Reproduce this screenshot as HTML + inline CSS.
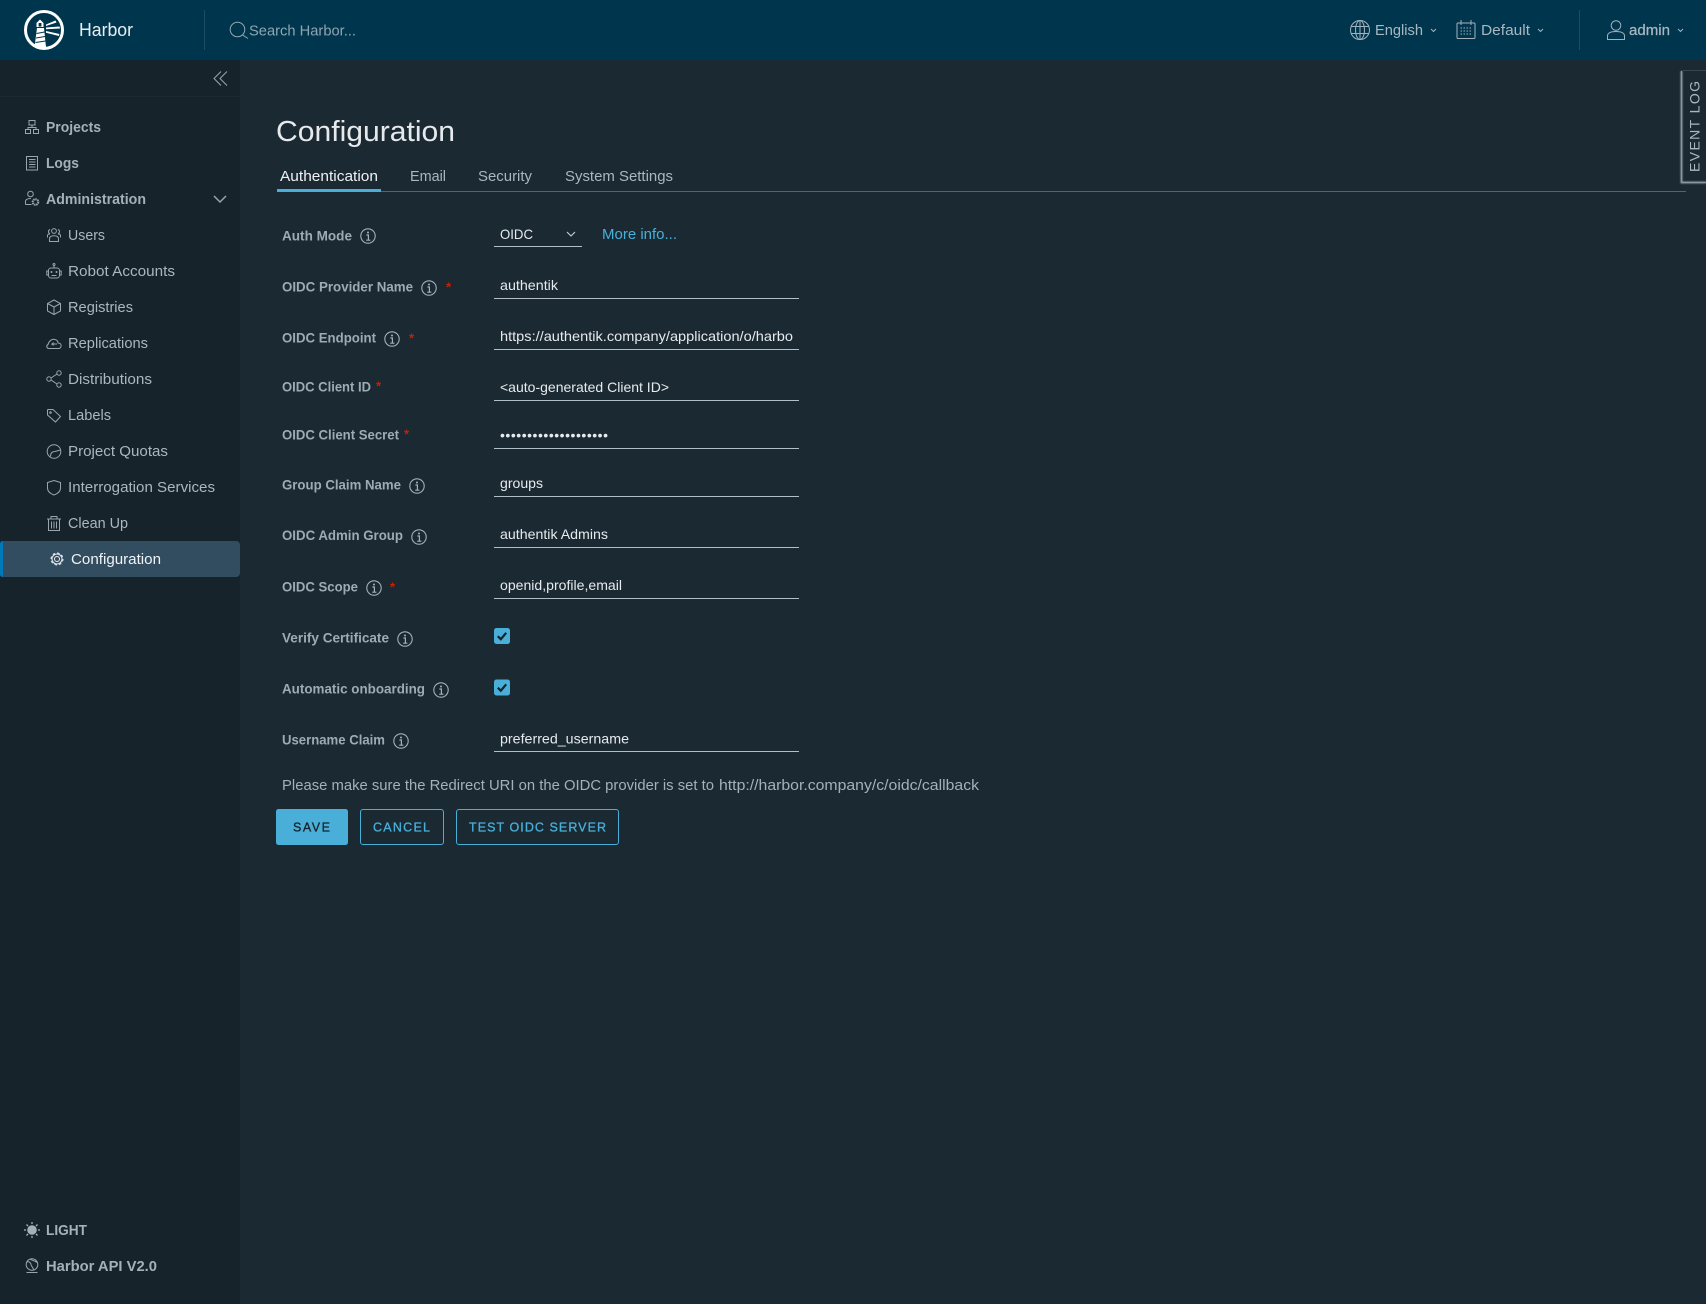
<!DOCTYPE html>
<html lang="en"><head><meta charset="utf-8"><title>Harbor</title>
<style>
html,body{margin:0;padding:0;width:1706px;height:1304px;overflow:hidden;background:#1b2932}
#hd{position:absolute;left:0;top:0;width:1706px;height:60px;background:#00364d}
#sb{position:absolute;left:0;top:60px;width:240px;height:1244px;background:#17232b}
svg{position:absolute;left:0;top:0}
text{font-family:"Liberation Sans",sans-serif;dominant-baseline:central}
.n{font-size:15px;font-weight:700;fill:#a3b1ba}
.s{font-size:15px;fill:#a9b7c0}
.l{font-size:13.5px;font-weight:700;fill:#9dabb4}
.v{font-size:14px;fill:#e6eaed}
.t{font-size:15px;fill:#a9b7c0}
.h{font-size:15px;fill:#a9b7c0}
.b{font-size:12.5px;font-weight:700;fill:#49afd9}
.ic{fill:none;stroke:#98a6af;stroke-width:1}
.ul{stroke:#b3bfc7;stroke-width:1.1}
.st{font-size:13px;fill:#c92100;font-weight:700}
</style></head><body>
<div id="hd"></div><div id="sb"></div>
<svg width="1706" height="1304" viewBox="0 0 1706 1304" xmlns="http://www.w3.org/2000/svg">
<defs>
<symbol id="i" viewBox="0 0 16 16"><circle cx="8" cy="8" r="7.2" fill="none" stroke="#a3b1ba" stroke-width="1.1"/><circle cx="8" cy="4.5" r="1" fill="#a3b1ba"/><path d="M6.4 7H8.4V12M6.2 12.2H10.4" fill="none" stroke="#a3b1ba" stroke-width="1.2"/></symbol>
<symbol id="c" viewBox="0 0 16 16"><rect width="16" height="16" rx="2.5" fill="#49afd9"/><path d="M3.8 8.2L6.8 11.2L12.2 4.8" fill="none" stroke="#17232b" stroke-width="2.2"/></symbol>
<filter id="sh" x="-30%" y="-10%" width="160%" height="120%"><feGaussianBlur stdDeviation="0.9"/></filter>
</defs>

<!-- header -->
<circle cx="44" cy="30" r="18.500" fill="none" stroke="#fff" stroke-width="3"/>
<path d="M37 28H44L46 47H34.500Z" fill="#fff"/>
<path d="M36.500 27V23L40 19.500L43.500 23V27Z" fill="#fff"/>
<rect x="38.600" y="23" width="2.800" height="3.600" fill="#00364d"/>
<path d="M36.500 33.500L44.500 32M36 38L45 36.500M35.500 42.500L45.500 41" stroke="#00364d" stroke-width="1"/>
<path d="M46 24.500L55.500 20.500L56.500 22.500L46 26ZM46 27.500L59.500 26.500L60 28.500L46 29.300ZM46 31L59.500 34L58.800 36L46 32.800Z" fill="#fff"/>
<text x="79" y="30" font-size="18" fill="#e9edf0" textLength="54" lengthAdjust="spacingAndGlyphs">Harbor</text>
<line x1="204.500" y1="10" x2="204.500" y2="50" stroke="#1d4c63" stroke-width="1"/>
<circle cx="237.500" cy="29.500" r="7.300" class="ic"/>
<line x1="242.500" y1="35" x2="248" y2="38.500" class="ic"/>
<text x="249" y="31" class="h" style="fill:#8fa4b0" textLength="107" lengthAdjust="spacingAndGlyphs">Search Harbor...</text>

<g class="ic" style="stroke:#a3b1ba">
<circle cx="1360" cy="30" r="9.500"/><ellipse cx="1360" cy="30" rx="4.500" ry="9.500"/><path d="M1351 26.500H1369M1351 33.500H1369M1360 20.500V39.500"/>
<rect x="1457" y="23" width="18" height="15.500" rx="1"/><path d="M1461 20V25M1471 20V25M1464 23H1468"/>
<path d="M1460.500 28H1472M1460.500 31H1472M1460.500 34H1472" stroke-dasharray="1.500 1.500"/>
<circle cx="1616" cy="25.500" r="4.800"/><path d="M1607.500 39.500V36C1607.500 33 1611 31.500 1616 31.500C1621 31.500 1624.500 33 1624.500 36V39.500Z"/>
<path d="M1431 29L1433.500 31.500L1436 29M1538 29L1540.500 31.500L1543 29M1678 29L1680.500 31.500L1683 29"/>
</g>
<text x="1375" y="30.500" class="h" textLength="48" lengthAdjust="spacingAndGlyphs">English</text>
<text x="1481" y="30.500" class="h" textLength="49" lengthAdjust="spacingAndGlyphs">Default</text>
<line x1="1579.500" y1="10" x2="1579.500" y2="50" stroke="#1d4c63"/>
<text x="1629" y="30.500" class="h" textLength="41" lengthAdjust="spacingAndGlyphs" style="stroke:#a9b7c0;stroke-width:.25">admin</text>

<!-- sidebar -->
<line x1="0" y1="96.500" x2="240" y2="96.500" stroke="#1c2a33"/>
<path d="M221 71.500L214 78.500L221 85.500M227 71.500L220 78.500L227 85.500" class="ic"/>
<rect x="0" y="541" width="240" height="36" rx="4" fill="#324d60"/>
<path d="M3 541Q0 541 0 544V574Q0 577 3 577Z" fill="#0079b8"/>
<text x="46" y="127.500" class="n" textLength="55" lengthAdjust="spacingAndGlyphs">Projects</text>
<text x="46" y="163.500" class="n" textLength="33" lengthAdjust="spacingAndGlyphs">Logs</text>
<text x="46" y="199.500" class="n" textLength="100" lengthAdjust="spacingAndGlyphs">Administration</text>
<text x="68" y="235.500" class="s" textLength="37" lengthAdjust="spacingAndGlyphs">Users</text>
<text x="68" y="271.500" class="s" textLength="107" lengthAdjust="spacingAndGlyphs">Robot Accounts</text>
<text x="68" y="307.500" class="s" textLength="65" lengthAdjust="spacingAndGlyphs">Registries</text>
<text x="68" y="343.500" class="s" textLength="80" lengthAdjust="spacingAndGlyphs">Replications</text>
<text x="68" y="379.500" class="s" textLength="84" lengthAdjust="spacingAndGlyphs">Distributions</text>
<text x="68" y="415.500" class="s" textLength="43" lengthAdjust="spacingAndGlyphs">Labels</text>
<text x="68" y="451.500" class="s" textLength="100" lengthAdjust="spacingAndGlyphs">Project Quotas</text>
<text x="68" y="487.500" class="s" textLength="147" lengthAdjust="spacingAndGlyphs">Interrogation Services</text>
<text x="68" y="523.500" class="s" textLength="60" lengthAdjust="spacingAndGlyphs">Clean Up</text>
<text x="71" y="559.500" class="s" style="fill:#f0f3f5" textLength="90" lengthAdjust="spacingAndGlyphs">Configuration</text>
<text x="46" y="1230.500" class="n" textLength="41" lengthAdjust="spacingAndGlyphs">LIGHT</text>
<text x="46" y="1266.500" class="n" textLength="111" lengthAdjust="spacingAndGlyphs">Harbor API V2.0</text>

<g class="ic">
<!-- projects -->
<rect x="29" y="120.500" width="6" height="4.500"/><rect x="25.500" y="129.500" width="5" height="4"/><rect x="33.500" y="129.500" width="5" height="4"/><path d="M32 125V127.500M28 129.500V127.500H36V129.500"/>
<!-- logs -->
<rect x="26.500" y="156.500" width="11" height="13.500"/><path d="M29 159.500H35.500M29 162H35.500M29 164.500H35.500M29 167H35.500"/>
<!-- admin -->
<circle cx="30.500" cy="194" r="2.800"/><path d="M25.500 204.500V201.500C25.500 199.500 28 198.500 31 198.500M25.500 204.500H31.500"/>
<circle cx="35.500" cy="202" r="2.800" stroke-width="2" stroke-dasharray="1.500 .6"/>
<!-- chevron -->
<path d="M214 196L220 202L226 196" stroke-width="1.500"/>
<!-- users -->
<circle cx="54" cy="231" r="2.400"/><path d="M49.500 241.500V239C49.500 236.800 51.500 235.800 54 235.800C56.500 235.800 58.500 236.800 58.500 239V241.500Z"/><path d="M50 229.500A2.200 2.200 0 0 0 50 233.700M47.500 237.500V235.700C47.500 234.700 48.500 234 50 234M58 229.500A2.200 2.200 0 0 1 58 233.700M60.500 237.500V235.700C60.500 234.700 59.500 234 58 234"/>
<!-- robot -->
<rect x="48.500" y="268" width="11" height="10" rx="2.500"/><path d="M54 268V265.500M48.500 271H46.800V275H48.500M59.500 271H61.200V275H59.500M51.500 275.500H56.500"/><circle cx="54" cy="264.500" r="1"/><circle cx="51.500" cy="272" r=".5"/><circle cx="56.500" cy="272" r=".5"/>
<!-- registries -->
<path d="M54 300L60.500 303.500V311L54 314.500L47.500 311V303.500ZM47.500 303.500L54 307L60.500 303.500M54 307V314.500"/>
<!-- replications -->
<path d="M49 348.500C46.500 348.500 46 345.500 48 344.500C49 341 52 338.500 55 339.500C57 340 58 341.500 58 343C60.500 343 61.500 344.500 61 346.500C60.700 348 60 348.500 58.500 348.500Z"/><path d="M57 344H52L53.500 342.500M52 344L53.500 345.500"/>
<!-- distributions -->
<circle cx="49" cy="379" r="2.200"/><circle cx="59" cy="373" r="2.200"/><circle cx="59" cy="385" r="2.200"/><path d="M51 378L57 374M51 380L57 384"/>
<!-- labels -->
<path d="M47.500 410V415L55.500 422L60.500 416.500L53 409.500H48Z"/><circle cx="50.500" cy="412.500" r=".8"/>
<!-- quotas -->
<circle cx="54" cy="451.500" r="6.800"/><path d="M50.500 456.500C50.500 453 52 451.500 55 451.500L60.500 450"/>
<!-- shield -->
<path d="M54 480.500L60.500 482.500V488C60.500 491 58 493.500 54 495C50 493.500 47.500 491 47.500 488V482.500Z"/>
<!-- trash -->
<path d="M48.500 519.500V530.500H59.500V519.500M47 519H61M51 519V516.500H57V519M51.500 521.500V528.500M54 521.500V528.500M56.500 521.500V528.500"/>
<!-- gear -->
<circle cx="57" cy="559" r="2.500" stroke="#e8ecef"/><circle cx="57" cy="559" r="5" stroke="#e8ecef"/><circle cx="57" cy="559" r="6" stroke="#e8ecef" stroke-width="1" stroke-dasharray="2.500 2.200"/>
<!-- api -->
<circle cx="32" cy="1264.500" r="5.800"/><path d="M27 1262C29 1261 31 1263 31 1264.500C31 1266 33 1267 33.500 1269.500M30 1259C31.500 1260.500 34 1260 37 1262.500M26.500 1272.500H37.500"/>
</g>
<!-- sun -->
<circle cx="32" cy="1230" r="4.800" fill="#a3b1ba"/>
<path d="M32 1222V1224M32 1236V1238M24 1230H26M38 1230H40M26.500 1224.500L28 1226M36 1234L37.500 1235.500M26.500 1235.500L28 1234M36 1226L37.500 1224.500" stroke="#a3b1ba" stroke-width="1.300"/>

<!-- main -->
<text x="276" y="132" font-size="29" style="fill:#e6eaed" textLength="179" lengthAdjust="spacingAndGlyphs">Configuration</text>
<line x1="277" y1="191.500" x2="1686" y2="191.500" stroke="#56646d" stroke-width="1"/>
<rect x="277" y="189" width="104" height="3" fill="#49afd9"/>
<text x="280" y="176.500" class="t" style="fill:#eef1f3" textLength="98" lengthAdjust="spacingAndGlyphs">Authentication</text>
<text x="410" y="176.500" class="t" textLength="36" lengthAdjust="spacingAndGlyphs">Email</text>
<text x="478" y="176.500" class="t" textLength="54" lengthAdjust="spacingAndGlyphs">Security</text>
<text x="565" y="176.500" class="t" textLength="108" lengthAdjust="spacingAndGlyphs">System Settings</text>

<!-- labels -->
<text x="282" y="236" class="l" textLength="70" lengthAdjust="spacingAndGlyphs">Auth Mode</text><use href="#i" x="360" y="228" width="16" height="16"/>
<text x="282" y="287" class="l" textLength="131" lengthAdjust="spacingAndGlyphs">OIDC Provider Name</text><use href="#i" x="421" y="280" width="16" height="16"/><text x="446" y="287" class="st">*</text>
<text x="282" y="338" class="l" textLength="94" lengthAdjust="spacingAndGlyphs">OIDC Endpoint</text><use href="#i" x="384" y="331" width="16" height="16"/><text x="409" y="338" class="st">*</text>
<text x="282" y="387" class="l" textLength="89" lengthAdjust="spacingAndGlyphs">OIDC Client ID</text><text x="376" y="386" class="st">*</text>
<text x="282" y="435" class="l" textLength="117" lengthAdjust="spacingAndGlyphs">OIDC Client Secret</text><text x="404" y="434" class="st">*</text>
<text x="282" y="485" class="l" textLength="119" lengthAdjust="spacingAndGlyphs">Group Claim Name</text><use href="#i" x="409" y="478" width="16" height="16"/>
<text x="282" y="535.500" class="l" textLength="121" lengthAdjust="spacingAndGlyphs">OIDC Admin Group</text><use href="#i" x="411" y="529" width="16" height="16"/>
<text x="282" y="587" class="l" textLength="76" lengthAdjust="spacingAndGlyphs">OIDC Scope</text><use href="#i" x="366" y="580" width="16" height="16"/><text x="390" y="587" class="st">*</text>
<text x="282" y="638" class="l" textLength="107" lengthAdjust="spacingAndGlyphs">Verify Certificate</text><use href="#i" x="397" y="631" width="16" height="16"/>
<text x="282" y="689" class="l" textLength="143" lengthAdjust="spacingAndGlyphs">Automatic onboarding</text><use href="#i" x="433" y="682" width="16" height="16"/>
<text x="282" y="740" class="l" textLength="103" lengthAdjust="spacingAndGlyphs">Username Claim</text><use href="#i" x="393" y="733" width="16" height="16"/>

<!-- values -->
<text x="500" y="234" class="v" textLength="33" lengthAdjust="spacingAndGlyphs">OIDC</text>
<path d="M567 232L571 236L575 232" fill="none" stroke="#c9d2d8" stroke-width="1.100"/>
<line x1="494" y1="246.500" x2="582" y2="246.500" class="ul"/>
<text x="602" y="234.500" class="t" style="fill:#49afd9" textLength="75" lengthAdjust="spacingAndGlyphs">More info...</text>
<text x="500" y="285" class="v" textLength="58" lengthAdjust="spacingAndGlyphs">authentik</text>
<line x1="494" y1="298.500" x2="799" y2="298.500" class="ul"/>
<text x="500" y="336" class="v" textLength="293" lengthAdjust="spacingAndGlyphs">https://authentik.company/application/o/harbo</text>
<line x1="494" y1="349.500" x2="799" y2="349.500" class="ul"/>
<text x="500" y="387" class="v" textLength="169" lengthAdjust="spacingAndGlyphs">&lt;auto-generated Client ID&gt;</text>
<line x1="494" y1="400.500" x2="799" y2="400.500" class="ul"/>
<text x="500" y="435" class="v" textLength="108" lengthAdjust="spacing">••••••••••••••••••••</text>
<line x1="494" y1="448.500" x2="799" y2="448.500" class="ul"/>
<text x="500" y="483" class="v" textLength="43" lengthAdjust="spacingAndGlyphs">groups</text>
<line x1="494" y1="496.500" x2="799" y2="496.500" class="ul"/>
<text x="500" y="534" class="v" textLength="108" lengthAdjust="spacingAndGlyphs">authentik Admins</text>
<line x1="494" y1="547.500" x2="799" y2="547.500" class="ul"/>
<text x="500" y="585" class="v" textLength="122" lengthAdjust="spacingAndGlyphs">openid,profile,email</text>
<line x1="494" y1="598.500" x2="799" y2="598.500" class="ul"/>
<use href="#c" x="494" y="628" width="16" height="16"/>
<use href="#c" x="494" y="679.500" width="16" height="16"/>
<text x="500" y="738.500" class="v" textLength="129" lengthAdjust="spacingAndGlyphs">preferred_username</text>
<line x1="494" y1="751.500" x2="799" y2="751.500" class="ul"/>
<text x="282" y="785.500" class="t" style="fill:#a3b1ba" textLength="432" lengthAdjust="spacingAndGlyphs">Please make sure the Redirect URI on the OIDC provider is set to</text>
<text x="719" y="785.500" class="t" style="fill:#a3b1ba" textLength="260" lengthAdjust="spacingAndGlyphs">http://harbor.company/c/oidc/callback</text>

<!-- buttons -->
<rect x="276" y="809" width="72" height="36" rx="2.500" fill="#49afd9"/>
<text x="293" y="827.500" class="b" style="fill:#17232b;font-weight:400;stroke:#17232b;stroke-width:.3" textLength="37" lengthAdjust="spacing">SAVE</text>
<rect x="360.500" y="809.500" width="83" height="35" rx="2.500" fill="none" stroke="#49afd9"/>
<text x="373" y="827.500" class="b" style="font-weight:400;stroke:#49afd9;stroke-width:.3" textLength="57" lengthAdjust="spacing">CANCEL</text>
<rect x="456.500" y="809.500" width="162" height="35" rx="2.500" fill="none" stroke="#49afd9"/>
<text x="469" y="827.500" class="b" style="font-weight:400;stroke:#49afd9;stroke-width:.3" textLength="137" lengthAdjust="spacing">TEST OIDC SERVER</text>

<!-- event log -->
<path d="M1681.500 183V72Q1681.500 70.500 1683 70.500H1706V183Z" fill="#1b2932"/>
<path d="M1706 70.500H1683" fill="none" stroke="#37454e" stroke-width="1"/>
<path d="M1681.500 71V182.500H1706" fill="none" stroke="#8a979f" stroke-width="2" filter="url(#sh)"/>
<path d="M1681.500 71V182.500H1706" fill="none" stroke="#8a979f" stroke-width="1"/>
<text transform="translate(1694.500 172) rotate(-90)" font-size="14" style="fill:#a9b7c0" textLength="91" lengthAdjust="spacing">EVENT LOG</text>
</svg>
</body></html>
